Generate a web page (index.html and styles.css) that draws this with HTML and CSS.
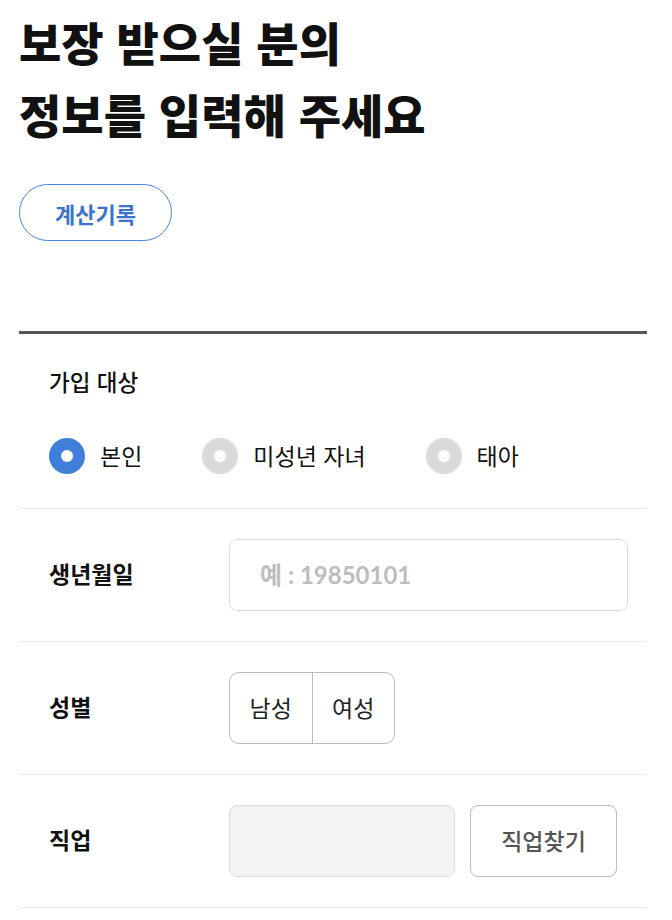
FILE: index.html
```html
<!DOCTYPE html>
<html lang="ko">
<head>
<meta charset="utf-8">
<title>정보 입력</title>
<link rel="stylesheet" href="styles.css">
</head>
<body>
<div class="page">
  <h1 class="title">보장 받으실 분의<br>정보를 입력해 주세요</h1>
  <button class="history-btn">계산기록</button>

  <div class="form">
    <div class="target">
      <div class="target-label">가입 대상</div>
      <div class="radios">
        <div class="radio on"><span class="dot"></span><span class="radio-text">본인</span></div>
        <div class="radio"><span class="dot"></span><span class="radio-text">미성년 자녀</span></div>
        <div class="radio"><span class="dot"></span><span class="radio-text">태아</span></div>
      </div>
    </div>

    <div class="row">
      <div class="row-label">생년월일</div>
      <div class="input birth"><span class="placeholder">예 : 19850101</span></div>
    </div>

    <div class="row">
      <div class="row-label">성별</div>
      <div class="segment">
        <div class="seg">남성</div>
        <div class="seg">여성</div>
      </div>
    </div>

    <div class="row last">
      <div class="row-label">직업</div>
      <div class="input job"></div>
      <button class="find-btn">직업찾기</button>
    </div>
  </div>
</div>
</body>
</html>
```

FILE: styles.css
```css
* { box-sizing: border-box; }
html, body { margin: 0; padding: 0; background: #fff; }
body {
  font-family: "Noto Sans CJK KR", "Noto Sans", sans-serif;
  color: #111;
}
.page {
  width: 672px;
  padding: 5px 25px 0 19px;
}
.title {
  margin: 0;
  font-size: 46px;
  line-height: 72px;
  font-weight: 800;
  letter-spacing: 0;
  color: #111;
}
.history-btn {
  display: block;
  margin-top: 35px;
  width: 153px;
  height: 57px;
  border: 1px solid #4a86e0;
  border-radius: 29px;
  background: #fff;
  color: #3b72cc;
  font-family: "Noto Sans CJK KR", sans-serif;
  font-size: 22px;
  font-weight: 700;
  padding: 0;
}
.form {
  margin-top: 90px;
  border-top: 3px solid #555;
}
.target {
  padding: 32px 19px 34px 30px;
}
.target-label {
  font-size: 22.5px;
  line-height: 30px;
  font-weight: 500;
  color: #111;
}
.radios {
  margin-top: 42px;
  display: flex;
  gap: 60px;
}
.radio {
  display: flex;
  align-items: center;
  gap: 15px;
  height: 36px;
}
.dot {
  width: 36px;
  height: 36px;
  border-radius: 50%;
  background: #d9dadc;
  display: flex;
  align-items: center;
  justify-content: center;
  flex-shrink: 0;
}
.dot::after {
  content: "";
  width: 12px;
  height: 12px;
  border-radius: 50%;
  background: #fff;
}
.radio.on .dot { background: #3f7edb; }
.radio-text {
  font-size: 23px;
  line-height: 30px;
  color: #111;
  padding-bottom: 2px;
}
.row {
  display: flex;
  align-items: center;
  padding: 30px 19px 30px 30px;
  border-top: 1px solid #ebebeb;
}
.row.last { border-bottom: 1px solid #ebebeb; }
.row-label {
  width: 180px;
  flex-shrink: 0;
  font-size: 23px;
  font-weight: 700;
  color: #111;
  padding-bottom: 4px;
}
.input {
  height: 72px;
  border: 1px solid #dcdcdc;
  border-radius: 8px;
  display: flex;
  align-items: center;
  flex-shrink: 0;
}
.input.birth {
  width: 399px;
  padding-left: 30px;
  padding-bottom: 3px;
}
.placeholder {
  font-family: "Lato", "Noto Sans CJK KR", sans-serif;
  font-size: 24px;
  font-weight: 700;
  color: #bdbdbd;
}
.segment {
  display: flex;
  width: 166px;
  height: 72px;
  border: 1px solid #bbb;
  border-radius: 10px;
  overflow: hidden;
}
.seg {
  flex: 1;
  display: flex;
  align-items: center;
  justify-content: center;
  font-size: 23px;
  color: #222;
  padding-bottom: 2px;
}
.seg + .seg { border-left: 1px solid #bbb; }
.input.job {
  width: 226px;
  background: #f2f3f5;
}
.find-btn {
  margin-left: 15px;
  width: 147px;
  height: 72px;
  border: 1px solid #bbb;
  border-radius: 8px;
  background: #fff;
  font-family: "Noto Sans CJK KR", sans-serif;
  font-size: 23px;
  font-weight: 500;
  color: #555;
  padding: 0 0 3px 0;
}
```
